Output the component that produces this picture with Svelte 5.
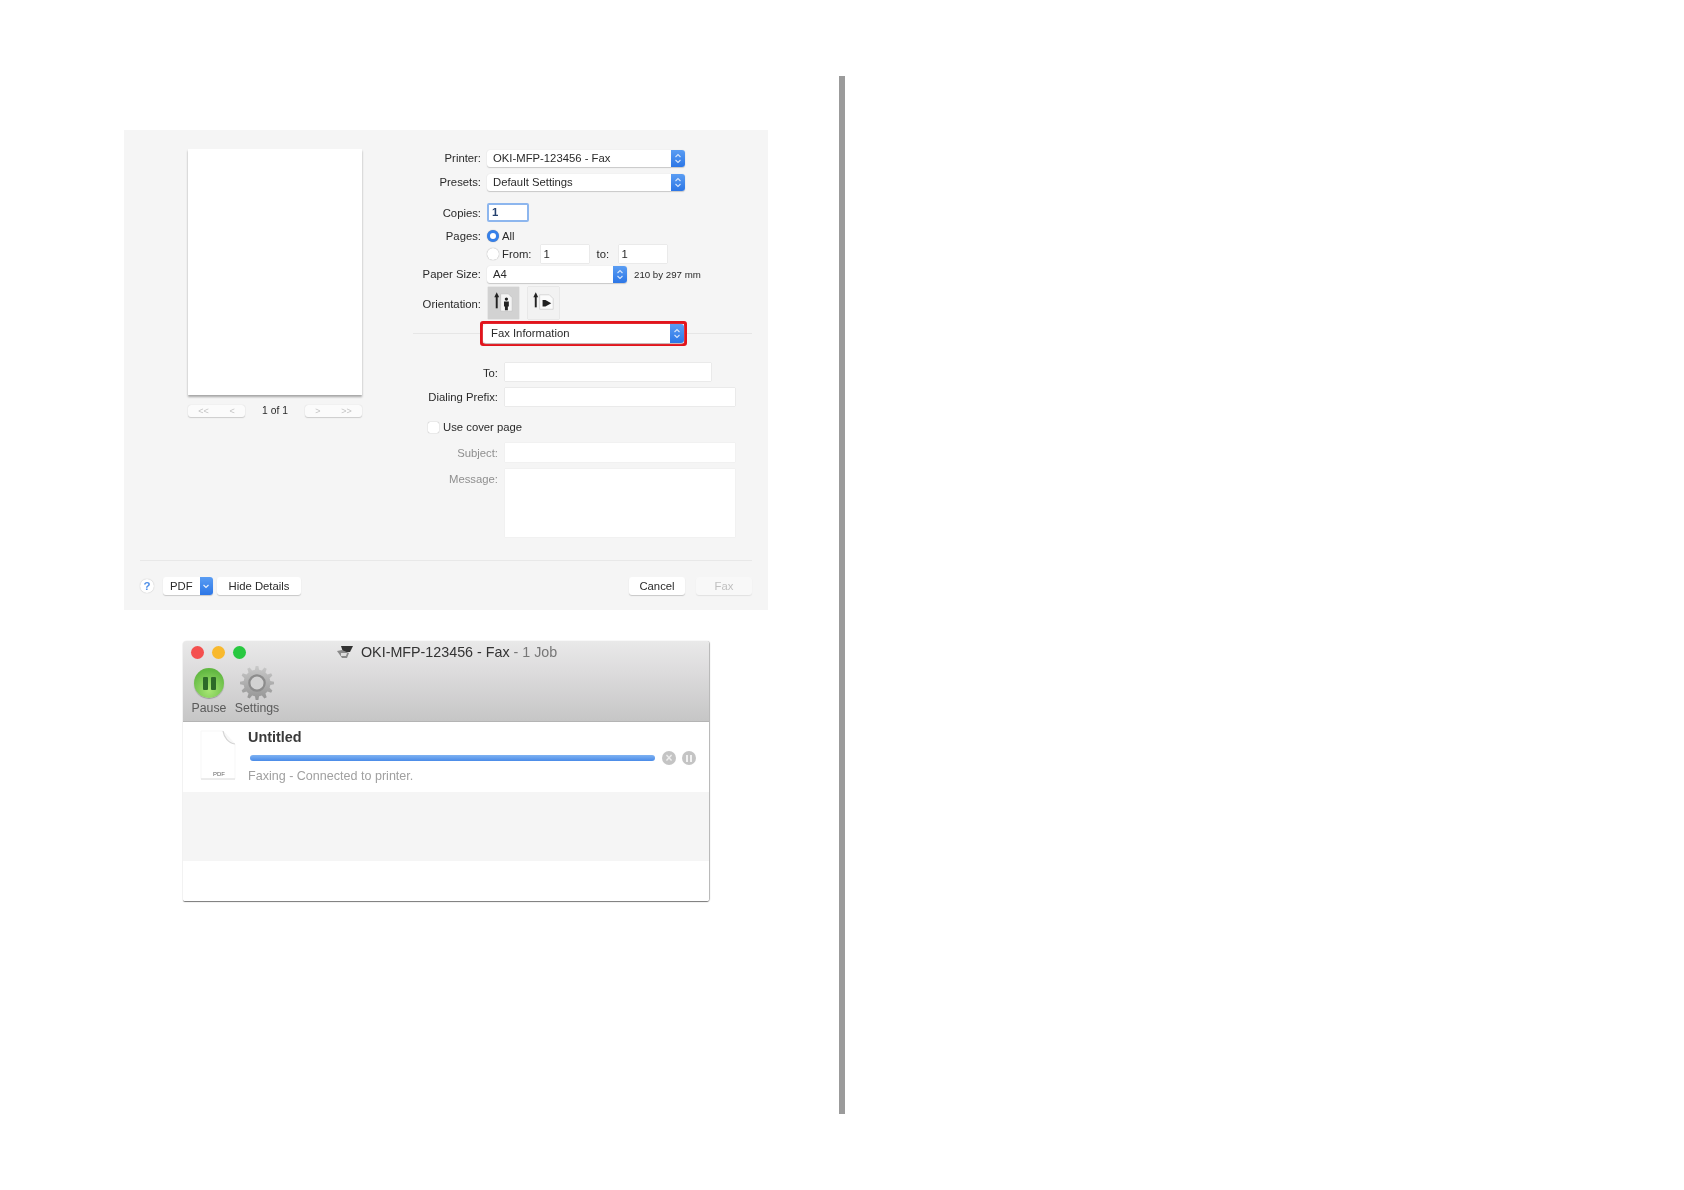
<script>
  const gearPts = [];
  const teeth = 12;
  for (let i = 0; i < teeth; i++) {
    const a = (i / teeth) * Math.PI * 2;
    const s = Math.PI / teeth;
    [[-0.6, 15], [-0.3, 19], [0.3, 19], [0.6, 15]].forEach(([o, r]) => {
      const t = a + o * s;
      gearPts.push((20 + r * Math.cos(t)).toFixed(1) + ',' + (20 + r * Math.sin(t)).toFixed(1));
    });
  }
  const gear = gearPts.join(' ');
</script>

{#snippet stepper()}
  <span class="stepper">
    <svg viewBox="0 0 14 17" width="14" height="17" aria-hidden="true">
      <path d="M4.5 7 7 4.5 9.5 7M4.5 10 7 12.5 9.5 10" fill="none" stroke="#d5e4fb" stroke-width="1.1" />
    </svg>
  </span>
{/snippet}

<div class="page">
  <div class="left">
    <section class="dialog">
      <div class="main">
        <div class="preview">
          <div class="sheet"></div>
          <div class="pager">
            <span class="pbtn"><i>&lt;&lt;</i><i>&lt;</i></span>
            <span class="pcount">1 of 1</span>
            <span class="pbtn"><i>&gt;</i><i>&gt;&gt;</i></span>
          </div>
        </div>

        <div class="form">
          <div class="row h17 up">
            <span class="lab">Printer:</span>
            <div class="select w198"><span>OKI-MFP-123456 - Fax</span>{@render stepper()}</div>
          </div>
          <div class="row h17 mt7 up">
            <span class="lab">Presets:</span>
            <div class="select w198"><span>Default Settings</span>{@render stepper()}</div>
          </div>
          <div class="row h19 mt12">
            <span class="lab">Copies:</span>
            <div class="copies">1</div>
          </div>
          <div class="row h16 mt6">
            <span class="lab">Pages:</span>
            <span class="radio on"></span><span class="rtext">All</span>
          </div>
          <div class="row h19">
            <span class="lab"></span>
            <span class="radio"></span><span class="rtext">From:</span>
            <div class="num from">1</div>
            <span class="tolab">to:</span>
            <div class="num">1</div>
          </div>
          <div class="row h18 mt2">
            <span class="lab">Paper Size:</span>
            <div class="select w140"><span>A4</span>{@render stepper()}</div>
            <span class="dims">210 by 297 mm</span>
          </div>
          <div class="row h32 mt4">
            <span class="lab down">Orientation:</span>
            <div class="orient active">
              <svg viewBox="0 0 32 32" width="31" height="31" aria-hidden="true">
                <path d="M9 22V10" stroke="#222" stroke-width="2" />
                <path d="M6.500 10.500 9 5.500l2.500 5z" fill="#222" />
                <path d="M13 7h8l4 4v14H13z" fill="#f4f4f4" stroke="#c4c4c4" stroke-width=".8" />
                <circle cx="19" cy="12.500" r="1.700" fill="#222" />
                <path d="M16.500 15h5v5h-1v4h-3v-4h-1z" fill="#222" />
              </svg>
            </div>
            <div class="orient second">
              <svg viewBox="0 0 32 32" width="31" height="31" aria-hidden="true">
                <path d="M8 21V10" stroke="#222" stroke-width="2" />
                <path d="M5.500 10.500 8 5.500l2.500 5z" fill="#222" />
                <path d="M12 8h10l4 4v11H12z" fill="#fbfbfb" stroke="#cfcfcf" stroke-width=".8" />
                <path d="M15 13.500v6.500h3l6-3.200-6-3.300z" fill="#222" />
              </svg>
            </div>
          </div>
          <div class="faxrow mt2">
            <div class="redbox">
              <div class="select full"><span>Fax Information</span>{@render stepper()}</div>
            </div>
          </div>
          <div class="row h18 mt17">
            <span class="lab2 down">To:</span>
            <div class="field w206"></div>
          </div>
          <div class="row h18 mt7">
            <span class="lab2">Dialing Prefix:</span>
            <div class="field w230"></div>
          </div>
          <div class="row h14 mt14">
            <span class="cover"><span class="check"></span>Use cover page</span>
          </div>
          <div class="row h19 mt9">
            <span class="lab2 dim">Subject:</span>
            <div class="field w230 off"></div>
          </div>
          <div class="row msg mt7">
            <span class="lab2 dim">Message:</span>
            <div class="field w230 off tall"></div>
          </div>
        </div>
      </div>

      <footer class="foot">
        <span class="help">?</span>
        <div class="pdf"><span>PDF</span>
          <span class="pdfarrow">
            <svg viewBox="0 0 12 18" width="12" height="18" aria-hidden="true"><path d="M3.500 8 6 10.500 8.500 8" fill="none" stroke="#e6effc" stroke-width="1.2" /></svg>
          </span>
        </div>
        <div class="btn hide">Hide Details</div>
        <div class="spacer"></div>
        <div class="btn cancel">Cancel</div>
        <div class="btn fax">Fax</div>
      </footer>
    </section>

    <section class="queue">
      <header class="bar">
        <div class="titleline">
          <div class="lights"><i class="r"></i><i class="y"></i><i class="g"></i></div>
          <div class="title">
            <svg viewBox="0 0 18 14" width="18" height="14" aria-hidden="true">
              <path d="M5 1h12l-3 6H7z" fill="#333" />
              <path d="M1 6l5-1 7 3-2 5H6z" fill="#8a8a8a" />
              <path d="M5 8h6l-1 3H5z" fill="#ddd" />
            </svg>
            <span class="tname">OKI-MFP-123456 - Fax</span><span class="tjob">&nbsp;- 1 Job</span>
          </div>
        </div>
        <div class="tools">
          <div class="tool t1">
            <span class="pause"><i></i><i></i></span>
            <span class="tlabel">Pause</span>
          </div>
          <div class="tool t2">
            <svg viewBox="0 0 40 40" width="36" height="36" aria-hidden="true">
              <defs>
                <linearGradient id="gearfill" x1="0" y1="0" x2="0" y2="1">
                  <stop offset="0" stop-color="#c9c9c9" />
                  <stop offset="1" stop-color="#949494" />
                </linearGradient>
              </defs>
              <polygon points={gear} fill="url(#gearfill)" />
              <circle cx="20" cy="20" r="8.500" fill="#d2d2d2" stroke="#8c8c8c" stroke-width="2.500" />
            </svg>
            <span class="tlabel">Settings</span>
          </div>
        </div>
      </header>
      <div class="job">
        <div class="doc">
          <svg viewBox="0 0 38 50" width="38" height="50" aria-hidden="true">
            <path d="M2 1h22l12 13v35H2z" fill="#fff" stroke="#f7f7f7" stroke-width="1" />
            <path d="M24 1c1 6 5 12 12 13" fill="#f7f7f7" stroke="#d4d4d4" stroke-width="1.200" />
            <path d="M2 49h34" stroke="#dcdcdc" stroke-width="1" />
          </svg>
          <span class="doctext">PDF</span>
        </div>
        <div class="jobbody">
          <div class="jobname">Untitled</div>
          <div class="progressline">
            <div class="progress"></div>
            <span class="cbtn">×</span>
            <span class="cbtn pausebtn"><i></i><i></i></span>
          </div>
          <div class="status">Faxing - Connected to printer.</div>
        </div>
      </div>
      <div class="stripe"></div>
      <div class="tail"></div>
    </section>
  </div>
  <div class="rule"></div>
</div>

<style>
  :global(body) { margin: 0; background: #fff; }
  .page {
    width: 1684px; height: 1190px; display: flex; background: #fff;
    font-family: "Liberation Sans", Arial, sans-serif; color: #2a2a2a; overflow: hidden;
  }
  .left { width: 839px; box-sizing: border-box; padding: 130px 0 0 124px; flex: none; }
  .rule { width: 6px; height: 1038px; margin-top: 76px; background: #9b9b9b; flex: none; }

  .dialog {
    width: 644px; height: 480px; background: #f5f5f5; display: flex; flex-direction: column;
    font-size: 11.3px; filter: blur(.7px);
  }
  .main { height: 430px; display: flex; flex: none; }
  .preview { width: 289px; flex: none; box-sizing: border-box; padding: 19px 0 0 64px; }
  .sheet { width: 174px; height: 246px; background: #fff; box-shadow: 0 2px 2px #a6a6a6; }
  .pager { width: 174px; height: 13px; margin-top: 9px; display: flex; justify-content: space-between; align-items: center; }
  .pbtn {
    width: 57px; height: 12px; background: #fbfbfb; border-radius: 3px; box-shadow: 0 1px 1px #ccc, 0 0 1px #ccc;
    display: flex; justify-content: space-around; align-items: center; color: #c4c4c4; font-size: 9px;
  }
  .pbtn i { font-style: normal; }
  .pcount { font-size: 10.3px; width: 42px; text-align: center; white-space: nowrap; }

  .form { padding-top: 20px; flex: 1; display: flex; flex-direction: column; }
  .row { display: flex; align-items: center; flex: none; }
  .h14 { height: 14px; } .h16 { height: 16px; } .h17 { height: 17px; }
  .h18 { height: 18px; } .h19 { height: 19px; } .h32 { height: 32px; }
  .mt2 { margin-top: 2px; } .mt4 { margin-top: 4px; } .mt6 { margin-top: 6px; }
  .mt7 { margin-top: 7px; } .mt9 { margin-top: 9px; } .mt12 { margin-top: 12px; }
  .mt14 { margin-top: 14px; } .mt17 { margin-top: 17px; }

  .lab { width: 68px; margin-right: 6px; text-align: right; white-space: nowrap; flex: none; }
  .lab2 { width: 85px; margin-right: 7px; text-align: right; white-space: nowrap; flex: none; }
  .dim { color: #8f8f8f; }
  .up .lab { margin-top: -2px; }
  .up .select > span:first-child { margin-top: -1px; }
  .down { margin-top: 2px; }

  .select {
    height: 17px; background: #fff; border-radius: 3px; box-shadow: 0 1px 1px #c8c8c8, 0 0 1px #d4d4d4;
    display: flex; justify-content: space-between; align-items: center; padding-left: 6px; box-sizing: border-box;
    overflow: hidden;
  }
  .w198 { width: 198px; }
  .w140 { width: 140px; }
  .full { width: 100%; height: 19px; padding-left: 8px; }
  .full > span:first-child { margin-top: -1px; }
  .stepper {
    width: 14px; height: 100%; background: linear-gradient(#5a9df3, #2c76e6); flex: none;
    display: flex; align-items: center; justify-content: center;
  }
  .stepper svg { display: block; }
  .copies {
    width: 42px; height: 19px; box-sizing: border-box; background: #fff; border: 2px solid #8db6ee;
    border-radius: 2px; padding-left: 3px; line-height: 15px; font-weight: bold; color: #24406e;
  }
  .radio {
    width: 12px; height: 12px; border-radius: 50%; background: #fff; box-shadow: 0 0 1px #888; flex: none;
    box-sizing: border-box;
  }
  .radio.on { border: 3.500px solid #3580ea; }
  .rtext { margin-left: 3px; white-space: nowrap; }
  .num {
    width: 48px; height: 18px; background: #fff; box-shadow: 0 0 1px #b8b8b8; box-sizing: border-box;
    padding-left: 3px; line-height: 18px; flex: none;
  }
  .from { margin-left: 9px; }
  .tolab { margin: 0 8px; width: 14px; }
  .dims { margin-left: 7px; font-size: 9.7px; white-space: nowrap; }
  .orient {
    width: 31px; height: 32px; box-sizing: border-box; background: #f4f4f4; box-shadow: 0 0 1px #aaa;
  }
  .orient svg { display: block; }
  .orient.active { background: #d2d2d2; margin-left: 1px; }
  .second { margin-left: 9px; background: #f2f2f2; }

  .faxrow { height: 25px; position: relative; flex: none; }
  .faxrow::before {
    content: ""; position: absolute; left: 0; width: 339px; top: 12px; height: 1px; background: #e6e6e6;
  }
  .redbox {
    position: relative; width: 207px; height: 25px; margin-left: 67px; box-sizing: border-box;
    border: 3px solid #e2141c; border-radius: 3px; background: #fff;
  }

  .field {
    height: 100%; background: #fff; box-shadow: 0 0 1px #b5b5b5; flex: none;
  }
  .field.off { box-shadow: 0 0 1px #dedede; }
  .w206 { width: 206px; } .w230 { width: 230px; }
  .msg { height: 68px; align-items: flex-start; }
  .tall { height: 68px; }
  .msg .lab2 { margin-top: 4px; }
  .cover { display: flex; align-items: center; margin-left: 15px; white-space: nowrap; }
  .check {
    width: 11px; height: 11px; background: #fff; border-radius: 2px; box-shadow: 0 0 1px #888; margin-right: 4px;
  }

  .foot {
    height: 50px; margin: 0 16px; border-top: 1px solid #e8e8e8; box-sizing: border-box;
    display: flex; align-items: center; flex: none;
  }
  .help {
    width: 14px; height: 14px; border-radius: 50%; background: #fff; box-shadow: 0 0 1px #aaa;
    color: #4f8fe8; font-weight: bold; font-size: 11.5px; text-align: center; line-height: 14px; flex: none;
  }
  .pdf {
    margin-left: 9px; width: 50px; height: 18px; background: #fff; border-radius: 3px; overflow: hidden;
    box-shadow: 0 1px 1px #c8c8c8; display: flex; justify-content: space-between; align-items: center; padding-left: 7px;
    box-sizing: border-box; flex: none;
  }
  .pdfarrow { width: 13px; height: 18px; background: linear-gradient(#5a9df3, #2c76e6); display: block; flex: none; }
  .pdfarrow svg { display: block; }
  .btn {
    height: 18px; background: #fff; border-radius: 3px; box-shadow: 0 1px 1px #c8c8c8; text-align: center;
    line-height: 18px; flex: none;
  }
  .hide { margin-left: 4px; width: 84px; }
  .spacer { flex: 1; }
  .cancel { width: 56px; }
  .fax { width: 56px; margin-left: 11px; background: #f8f8f8; color: #c0c0c0; box-shadow: 0 1px 1px #e2e2e2; }

  .queue {
    width: 526px; height: 260px; margin: 31px 0 0 59px; background: #fff;
    display: flex; flex-direction: column; box-shadow: 0 1px 1px #777, 1px 0 1px #bbb;
    filter: blur(.7px); border-radius: 3px 3px 2px 2px; overflow: hidden;
  }
  .bar {
    height: 81px; background: linear-gradient(#e9e9e9, #dcdbdc 40%, #c6c6c6); border-bottom: 1px solid #b4b4b4;
    box-sizing: border-box; flex: none;
  }
  .titleline { height: 22px; display: flex; align-items: center; }
  .lights { display: flex; gap: 8px; margin-left: 8px; width: 66px; flex: none; }
  .lights i { width: 13px; height: 13px; border-radius: 50%; display: block; }
  .r { background: #f4504f; } .y { background: #f8b92e; } .g { background: #28c840; }
  .title { display: flex; align-items: center; font-size: 14.3px; margin-left: 79px; white-space: nowrap; }
  .title svg { margin-right: 7px; }
  .tname { color: #333; }
  .tjob { color: #777; }
  .tools { display: flex; margin-top: 2px; }
  .tool { display: flex; flex-direction: column; align-items: center; width: 48px; }
  .t1 { margin-left: 2px; }
  .pause {
    width: 30px; height: 30px; border-radius: 50%; margin: 3px 0; background: radial-gradient(circle at 50% 75%, #a8e674, #62b842 75%);
    box-shadow: 0 1px 1px #999; display: flex; gap: 3px; justify-content: center; align-items: center;
  }
  .pause i { width: 5px; height: 13px; background: #2d6a28; display: block; border-radius: 1px; }
  .tlabel { font-size: 12.3px; color: #5a5a5a; line-height: 14px; margin-top: 0; }

  .job { height: 70px; display: flex; flex: none; }
  .doc { position: relative; width: 38px; height: 50px; margin: 8px 0 0 16px; flex: none; }
  .doc svg { display: block; }
  .doctext {
    position: absolute; left: 14px; bottom: 3px; font-size: 6px; color: #666;
  }
  .jobbody { margin-left: 11px; flex: 1; }
  .jobname { font-size: 14.4px; font-weight: bold; color: #3a3a3a; margin-top: 7px; line-height: 17px; }
  .progressline { display: flex; align-items: center; margin-top: 4px; height: 16px; }
  .progress {
    width: 405px; height: 6px; margin-left: 2px; border-radius: 3px;
    background: linear-gradient(#7fb2f2, #4a8be8);
  }
  .cbtn {
    width: 14px; height: 14px; border-radius: 50%; background: #c4c4c4; color: #eee; font-size: 12px; font-weight: bold;
    line-height: 14px; text-align: center; margin-left: 7px; flex: none; display: flex; align-items: center; justify-content: center; gap: 2px;
  }
  .pausebtn { margin-left: 6px; }
  .pausebtn i { width: 2px; height: 7px; background: #f2f2f2; display: block; }
  .status { font-size: 12.55px; color: #a0a0a0; margin-top: 2px; line-height: 16px; }
  .stripe { height: 69px; background: #f5f5f5; flex: none; }
  .tail { flex: 1; background: #fff; }
</style>
